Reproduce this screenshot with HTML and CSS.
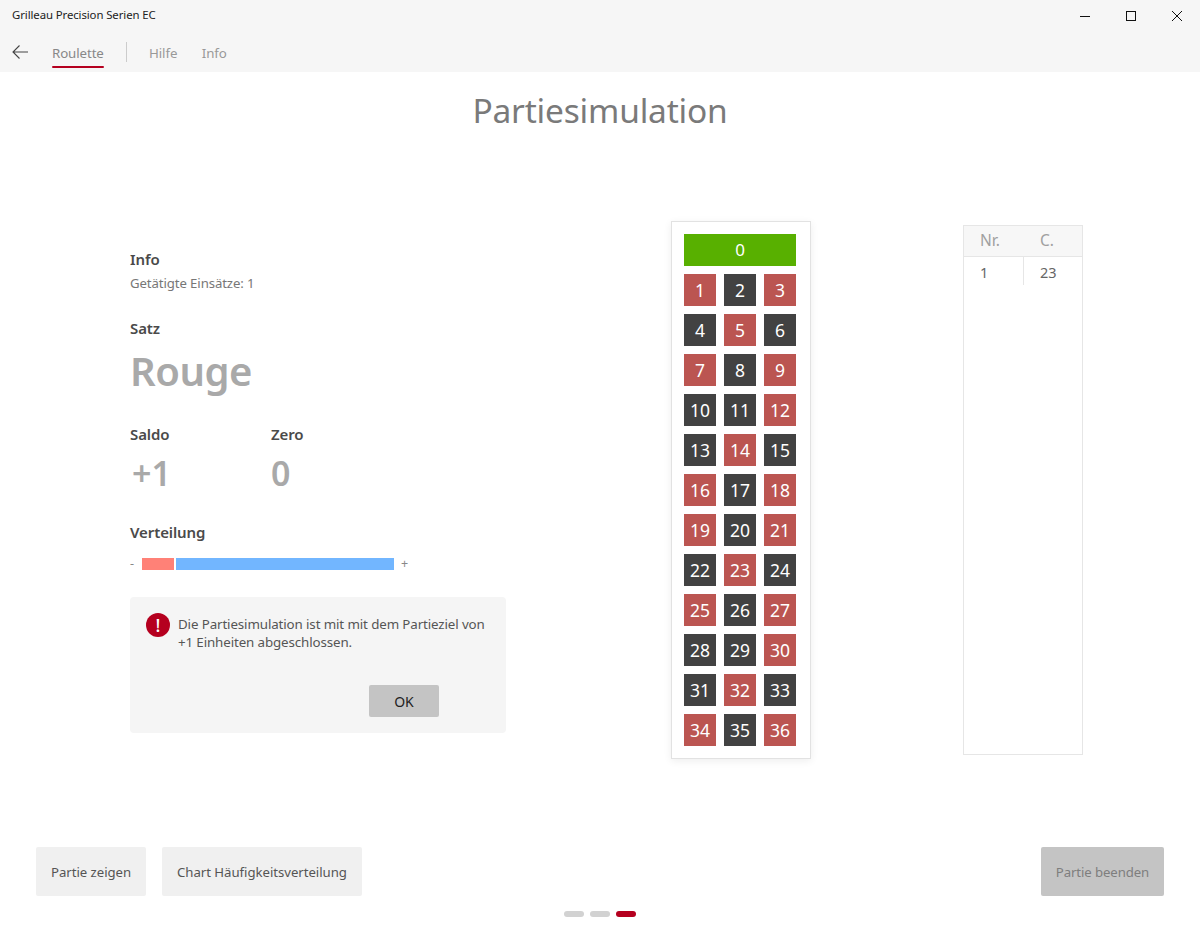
FILE: index.html
```html
<!DOCTYPE html>
<html lang="de">
<head>
<meta charset="utf-8">
<title>Grilleau Precision Serien EC</title>
<link rel="stylesheet" href="styles.css">
</head>
<body>
<div class="app">
  <header class="chrome">
    <div class="titlebar">
      <span class="app-title">Grilleau Precision Serien EC</span>
      <div class="win-controls">
        <svg class="win-icon" viewBox="0 0 46 30"><path d="M18 16.500h10" stroke="#111" fill="none"/></svg>
        <svg class="win-icon" viewBox="0 0 46 30"><rect x="18.500" y="11.500" width="9" height="9" stroke="#111" fill="none"/></svg>
        <svg class="win-icon" viewBox="0 0 46 30"><path d="M18 11l10 10M28 11l-10 10" stroke="#111" fill="none"/></svg>
      </div>
    </div>
    <nav class="navbar">
      <svg class="back" viewBox="0 0 16 14"><path d="M16 7H1M7.500.5L1 7l6.500 6.500" stroke="#444" stroke-width="1.100" fill="none"/></svg>
      <a class="tab active">Roulette</a>
      <span class="nav-sep"></span>
      <a class="tab">Hilfe</a>
      <a class="tab">Info</a>
    </nav>
  </header>
  <main class="page">
    <h1 class="page-title">Partiesimulation</h1>
    <div class="columns">
      <section class="left">
        <h2 class="label">Info</h2>
        <p class="small">Getätigte Einsätze: 1</p>
        <h2 class="label satz">Satz</h2>
        <div class="big">Rouge</div>
        <div class="stats">
          <div class="stat">
            <h2 class="label">Saldo</h2>
            <div class="value">+1</div>
          </div>
          <div class="stat">
            <h2 class="label">Zero</h2>
            <div class="value">0</div>
          </div>
        </div>
        <h2 class="label dist">Verteilung</h2>
        <div class="bar">
          <span class="sign">-</span>
          <span class="bar-neg"></span>
          <span class="bar-pos"></span>
          <span class="sign">+</span>
        </div>
        <div class="notice">
          <div class="notice-body">
            <span class="alert">!</span>
            <p class="notice-text">Die Partiesimulation ist mit mit dem Partieziel von<br>+1 Einheiten abgeschlossen.</p>
          </div>
          <button class="ok">OK</button>
        </div>
      </section>
      <section class="board">
        <div class="zero">0</div>
        <div class="numbers">
          <div class="n r">1</div><div class="n b">2</div><div class="n r">3</div>
          <div class="n b">4</div><div class="n r">5</div><div class="n b">6</div>
          <div class="n r">7</div><div class="n b">8</div><div class="n r">9</div>
          <div class="n b">10</div><div class="n b">11</div><div class="n r">12</div>
          <div class="n b">13</div><div class="n r">14</div><div class="n b">15</div>
          <div class="n r">16</div><div class="n b">17</div><div class="n r">18</div>
          <div class="n r">19</div><div class="n b">20</div><div class="n r">21</div>
          <div class="n b">22</div><div class="n r">23</div><div class="n b">24</div>
          <div class="n r">25</div><div class="n b">26</div><div class="n r">27</div>
          <div class="n b">28</div><div class="n b">29</div><div class="n r">30</div>
          <div class="n b">31</div><div class="n r">32</div><div class="n b">33</div>
          <div class="n r">34</div><div class="n b">35</div><div class="n r">36</div>
        </div>
      </section>
      <section class="log">
        <div class="log-head"><span class="cell first-col">Nr.</span><span class="cell">C.</span></div>
        <div class="log-row"><span class="cell first-col sep">1</span><span class="cell">23</span></div>
      </section>
    </div>
    <footer class="actions">
      <button class="btn">Partie zeigen</button>
      <button class="btn">Chart Häufigkeitsverteilung</button>
      <button class="btn end">Partie beenden</button>
    </footer>
    <div class="dots"><span class="dot"></span><span class="dot"></span><span class="dot on"></span></div>
  </main>
</div>
</body>
</html>
```
FILE: styles.css
```css
* { box-sizing: border-box; }
html, body { margin: 0; height: 100%; }
body {
  font-family: "Noto Sans", "Open Sans", sans-serif;
  background: #fff;
  color: #444;
  overflow: hidden;
}
.app { width: 1200px; height: 932px; display: flex; flex-direction: column; }
.chrome { height: 72px; background: #f6f6f6; flex: none; }
.titlebar { height: 30px; display: flex; justify-content: space-between; align-items: center; padding-left: 12px; }
.app-title { font-size: 11.400px; line-height: 14px; color: #222; letter-spacing: -0.1px; }
.win-controls { display: flex; }
.win-icon { width: 46px; height: 30px; display: block; }
.navbar { height: 42px; display: flex; align-items: center; padding-left: 12px; }
.back { width: 16px; height: 14px; margin-right: 24px; margin-top: 2px; }
.tab { font-size: 13.300px; color: #999; position: relative; margin-top: 4px; letter-spacing: -0.1px; }
.tab.active { color: #888; width: 52px; }
.tab.active::after { content: ""; position: absolute; left: 0; right: 0; bottom: -6px; height: 2px; border-radius: 1px; background: #b5001f; }
.nav-sep { width: 1px; height: 20px; background: #ccc; margin: 2px 22px 0; }
.tab + .tab { margin-left: 24.500px; }

.page { flex: 1; display: flex; flex-direction: column; }
.page-title { margin: 15px 0 0; height: 47px; font-size: 33.500px; line-height: 46px; font-weight: 400; color: #7a7a7a; text-align: center; letter-spacing: -0.2px; }
.columns { display: flex; align-items: flex-start; height: 713px; padding: 91px 0 0 130px; flex: none; }

.left { width: 376px; margin-top: 24px; }
.label { margin: 0; font-size: 15px; line-height: 20px; font-weight: 600; color: #4a4a4a; letter-spacing: -0.1px; }
.small { margin: 5px 0 0; font-size: 13.200px; line-height: 18px; color: #777; letter-spacing: -0.1px; }
.satz { margin-top: 26px; }
.big { font-size: 40px; line-height: 56px; font-weight: 600; color: #a9a9a9; margin-top: 5px; letter-spacing: -0.5px; }
.stats { display: flex; margin-top: 25px; }
.stat { width: 141px; }
.value { font-size: 34px; line-height: 46px; font-weight: 600; color: #a9a9a9; margin-top: 6px; padding-left: 2px; }
.stat + .stat .value { padding-left: 0; }
.dist { margin-top: 26px; }
.bar { display: flex; align-items: center; gap: 2px; height: 12px; margin-top: 16px; }
.sign { font-size: 12.500px; color: #888; line-height: 12px; width: 10px; }
.bar-neg { width: 32px; height: 12px; background: #ff8177; }
.bar-pos { width: 218px; height: 12px; background: #72b6ff; margin-right: 5px; }
.notice { margin-top: 27px; height: 136px; background: #f5f5f5; border-radius: 4px; padding: 16px; position: relative; }
.notice-body { display: flex; gap: 8px; }
.alert { flex: none; width: 24px; height: 24px; border-radius: 50%; background: #b5001f; color: #fff; font-size: 18px; line-height: 24px; font-weight: 500; text-align: center; }
.notice-text { margin: 2px 0 0; font-size: 13.350px; line-height: 18px; color: #555; letter-spacing: -0.12px; white-space: nowrap; }
.ok { position: absolute; left: 239px; top: 88px; width: 70px; height: 32px; border: 0; border-radius: 2px; background: #c4c4c4; color: #222; font: 400 14px "Noto Sans", sans-serif; padding: 0; }

.board { width: 140px; height: 538px; margin: -4px 0 0 165px; background: #fff; border: 1px solid #e2e2e2; box-shadow: 0 2px 8px rgba(0,0,0,.07); padding: 12px 14px 12px 12px; }
.zero { height: 32px; background: #58b000; color: #fff; font-size: 17px; line-height: 32px; text-align: center; }
.numbers { display: grid; grid-template-columns: repeat(3, 32px); grid-auto-rows: 32px; gap: 8px; margin-top: 8px; }
.n { color: #fff; font-size: 17.500px; line-height: 32px; text-align: center; }
.n.r { background: #bb5551; }
.n.b { background: #424242; }

.log { width: 120px; height: 530px; margin-left: 152px; border: 1px solid #e6e6e6; }
.log-head { display: flex; height: 31px; background: #f7f7f7; border-bottom: 1px solid #e6e6e6; color: #a0a0a0; }
.log-row { display: flex; height: 28px; color: #666; }
.cell { font-size: 14.500px; line-height: 30px; text-align: left; padding-left: 16px; }
.log-head .cell { font-size: 15.500px; line-height: 29px; }
.first-col { width: 60px; }
.sep { border-right: 1px solid #e6e6e6; }

.actions { display: flex; gap: 16px; padding: 0 36px; height: 49px; flex: none; }
.btn { height: 49px; border: 0; border-radius: 2px; background: #f0f0f0; color: #555; font: 400 13.200px "Noto Sans", sans-serif; letter-spacing: -0.04px; padding: 0 15px; }
.btn.end { margin-left: auto; width: 123px; background: #c4c4c4; color: #7e7e7e; padding: 0; letter-spacing: -0.1px; }
.dots { display: flex; justify-content: center; gap: 6px; margin-top: 15px; }
.dot { width: 20px; height: 6px; border-radius: 3px; background: #d2d2d2; }
.dot.on { background: #b5001f; }
```
